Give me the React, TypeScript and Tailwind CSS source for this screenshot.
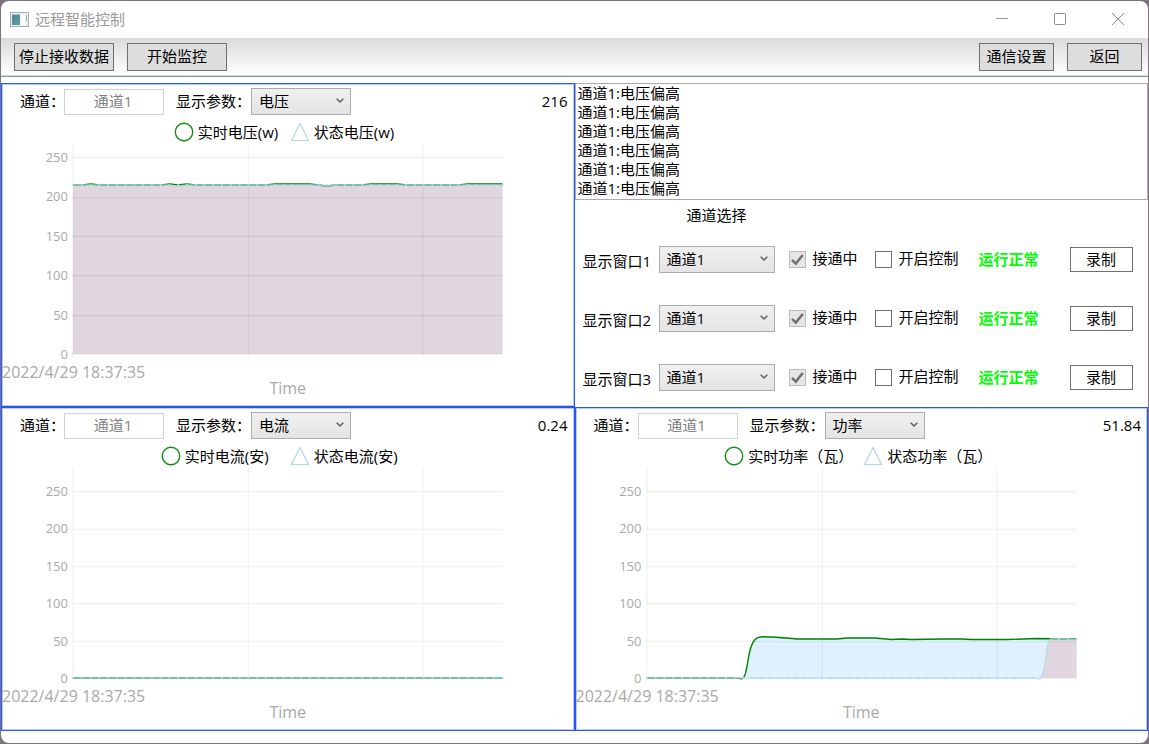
import { useState } from "react";

interface ChartInfo {
  id: string;
  param: string;
  value: string;
  live: string;
  status: string;
  legendCell: string;
  labelPad: string;
  gridY: number[];
  fills: Array<{ d: string; color: string }>;
  liveLine: string;
  statusLine: string;
  statusPoints: Array<[number, number]>;
}

const TICKS = [250, 200, 150, 100, 50, 0];
const PARAMS = ["电压", "电流", "功率"];
const CHANNELS = ["通道1", "通道2", "通道3"];
const STEP = 430 / 49;

const pointsAt = (y: number, from = 0, to = 49): Array<[number, number]> =>
  Array.from({ length: to - from + 1 }, (_, i) => [(from + i) * STEP, y]);

const POWER_LIVE =
  "M0 209 H88 C93 209 96 212 98 206 C102 196 101 170 113 168 C118 167 140 169 151 170 L190 170 L200 169 L228 169 L245 170.5 L255 170 L265 170.5 L295 170 L315 170 L325 170.5 L360 170.5 L390 169.5 L430 170";
const POWER_STATUS =
  "M0 209 H388 C392 209 394 212 396 206 C400 194 399 174 404 170 L412 169.5 L430 170.5";

const CHARTS: Record<string, ChartInfo> = {
  voltage: {
    id: "voltage", param: "电压", value: "216",
    live: "实时电压(w)", status: "状态电压(w)",
    legendCell: "w-[116px]", labelPad: "pt-1",
    gridY: [12.5, 52.5, 91.5, 130.5, 170.5, 209.5],
    fills: [{ d: "M0 40 H430 V209 H0 Z", color: "#e1d5df" }],
    liveLine:
      "M0 40 H9 L18 39 L27 40 H88 L97 39 L105 40 L114 39 L123 40 H193 L202 39 H237 L246 40 L254 41 L263 40 H289 L298 39 H325 L334 40 H386 L395 39 H430",
    statusLine: "M0 40 H96 L105 41 L114 40 H245 L254 41 L263 40 H430",
    statusPoints: pointsAt(40),
  },
  current: {
    id: "current", param: "电流", value: "0.24",
    live: "实时电流(安)", status: "状态电流(安)",
    legendCell: "w-[129px]", labelPad: "pt-[14px]",
    gridY: [22.5, 60.5, 97.5, 134.5, 172.5, 209.5],
    fills: [],
    liveLine: "M0 209 H430",
    statusLine: "M0 209 H430",
    statusPoints: pointsAt(209),
  },
  power: {
    id: "power", param: "功率", value: "51.84",
    live: "实时功率（瓦）", status: "状态功率（瓦）",
    legendCell: "w-[139px]", labelPad: "pt-[14px]",
    gridY: [22.5, 60.5, 97.5, 134.5, 172.5, 209.5],
    fills: [
      { d: `${POWER_LIVE} V209 Z`, color: "#dff0ff" },
      { d: "M394 209 C400 200 399 174 404 170 L430 170 V209 Z", color: "#e1d5df" },
    ],
    liveLine: POWER_LIVE,
    statusLine: POWER_STATUS,
    statusPoints: [...pointsAt(209, 0, 44), ...pointsAt(170, 47, 49)],
  },
};

const ALARMS = Array.from({ length: 6 }, () => "通道1:电压偏高");

function ComboBox({ id, value, options, width }: {
  id: string; value: string; options: string[]; width: string;
}) {
  const [current, setCurrent] = useState(value);
  return (
    <div className={`relative ${width}`}>
      <select
        id={id}
        value={current}
        onChange={e => setCurrent(e.target.value)}
        className="block h-[27px] w-full appearance-none border border-[#acacac] bg-linear-to-b from-[#f0f0f0] to-[#e4e4e4] pb-0.5 pl-[7px]"
      >
        {options.map(o => <option key={o} value={o}>{o}</option>)}
      </select>
      <svg viewBox="0 0 8 6" className="pointer-events-none absolute top-[10px] right-[7px] h-[6px] w-2">
        <path d="M0.7 0.8 L4 4 L7.3 0.8" fill="none" stroke="#606060" strokeWidth="1.6" />
      </svg>
    </div>
  );
}

function Plot({ chart }: { chart: ChartInfo }) {
  return (
    <svg viewBox="0 0 430 211" preserveAspectRatio="none" className="h-[211px] min-w-0 flex-1 overflow-visible">
      {chart.fills.map(f => <path key={f.d} d={f.d} fill={f.color} />)}
      <g stroke="#000" strokeOpacity="0.05" strokeWidth="1.3">
        {chart.gridY.map(y => <line key={y} x1="-1" x2="431" y1={y} y2={y} />)}
        {[0, 175.5, 350.5].map(x => <line key={x} x1={x} x2={x} y1="-1" y2="211" />)}
      </g>
      <path d={chart.liveLine} fill="none" stroke="#008000" strokeWidth="1.4" />
      <path d={chart.statusLine} fill="none" stroke="#add8e6" strokeOpacity="0.75" strokeWidth="1.4" />
      {chart.statusPoints.map(([x, y]) => (
        <circle key={x} cx={x} cy={y} r="1.1" fill="#add8e6" />
      ))}
    </svg>
  );
}

function ChartPanel({ chart }: { chart: ChartInfo }) {
  return (
    <section className="min-w-0 border border-[#2457f5] pt-1 shadow-[inset_0_0_0_1px_#b9cbfc]">
      <div className="flex h-[27px] items-center pl-[18px] pr-1.5">
        <label htmlFor={`${chart.id}-channel`} className="w-11 shrink-0 pb-0.5 whitespace-nowrap">通道：</label>
        <input
          id={`${chart.id}-channel`}
          type="text"
          defaultValue="通道1"
          disabled
          className="h-[26px] w-[100px] border border-[#cfd1d5] bg-white pr-0.5 pb-0.5 text-center text-[#838383]"
        />
        <label htmlFor={`${chart.id}-param`} className="ml-3 w-[75px] shrink-0 pb-0.5 whitespace-nowrap">显示参数：</label>
        <ComboBox id={`${chart.id}-param`} value={chart.param} options={PARAMS} width="w-[100px]" />
        <output className="ml-auto pb-0.5">{chart.value}</output>
      </div>

      {/* 图例 */}
      <div className="flex h-[30px] items-center justify-center pt-1 pl-1">
        <div className={`flex items-center gap-1 whitespace-nowrap ${chart.legendCell}`}>
          <svg viewBox="0 0 20 20" className="size-5 shrink-0">
            <circle cx="10" cy="10" r="8.7" fill="#fff" stroke="#158a15" strokeWidth="1.4" />
          </svg>
          {chart.live}
        </div>
        <div className={`flex items-center gap-1 whitespace-nowrap ${chart.legendCell}`}>
          <svg viewBox="0 0 20 20" className="size-5 shrink-0">
            <path d="M10 1.5 L18.5 18.5 H1.5 Z" fill="#fff" stroke="#add8e6" strokeWidth="1.2" />
          </svg>
          {chart.status}
        </div>
      </div>

      <div className="flex h-[218px] items-start pr-[71px]">
        <div className={`flex h-full w-[71px] shrink-0 flex-col justify-between pr-[5px] pb-px text-right text-[13px] leading-4 text-[#a9a9a9] ${chart.labelPad}`}>
          {TICKS.map(t => <span key={t}>{t}</span>)}
        </div>
        <Plot chart={chart} />
      </div>
      <div className="pt-px text-base leading-4 text-[#a9a9a9]">
        <div>2022/4/29 18:37:35</div>
        <div className="text-center">Time</div>
      </div>
    </section>
  );
}

function ChannelRow({ index }: { index: number }) {
  const [control, setControl] = useState(false);
  return (
    <div className="flex h-[59px] items-center whitespace-nowrap">
      <label htmlFor={`window-${index}`} className="w-[76px] shrink-0 pt-0.5">显示窗口{index}</label>
      <ComboBox id={`window-${index}`} value="通道1" options={CHANNELS} width="w-[116px]" />
      <label className="ml-3.5 flex w-[86px] shrink-0 items-center gap-[7px]">
        <span className="relative size-[17px]">
          <input type="checkbox" checked disabled readOnly className="block size-[17px] appearance-none border border-[#bcbcbc] bg-[#e6e6e6]" />
          <svg viewBox="0 0 17 17" className="pointer-events-none absolute inset-0 size-[17px]">
            <path d="M3 8.8 L6.8 12.6 L13.8 4" fill="none" stroke="#707070" strokeWidth="2.5" />
          </svg>
        </span>
        <span className="pb-1">接通中</span>
      </label>
      <label className="flex w-[104px] shrink-0 items-center gap-[7px]">
        <input
          type="checkbox"
          checked={control}
          onChange={e => setControl(e.target.checked)}
          className="block size-[17px] appearance-none border border-[#707070] bg-white checked:bg-[#707070]"
        />
        <span className="pb-1">开启控制</span>
      </label>
      <span className="w-[91px] shrink-0 pb-0.5 font-bold text-[#00ff00]">运行正常</span>
      <button type="button" className="h-[25px] w-[63px] border border-[#707070] bg-white pb-0.5">录制</button>
    </div>
  );
}

function TitleBar() {
  return (
    <header className="flex h-[37px] items-center pr-px text-[#999]">
      <svg viewBox="0 0 19 15" className="ml-[9px] h-[15px] w-[19px]">
        <defs>
          <linearGradient id="app-icon" x1="0" y1="0" x2="1" y2="1">
            <stop offset="0" stopColor="#4f7fa8" />
            <stop offset="1" stopColor="#5aa58c" />
          </linearGradient>
        </defs>
        <rect x="0.5" y="0.5" width="18" height="14" fill="#eef0f2" stroke="#a9adb3" />
        <rect x="2" y="2.5" width="8" height="10.5" fill="url(#app-icon)" />
        <rect x="11" y="2.5" width="4" height="10.5" fill="#fafafa" />
        <rect x="16" y="3" width="1" height="6" fill="#7fb59f" />
      </svg>
      <h1 className="ml-1.5 pb-0.5">远程智能控制</h1>
      <div className="ml-auto flex h-full pb-0.5">
        <button type="button" aria-label="最小化" className="flex w-[58px] items-center justify-center">
          <svg viewBox="0 0 12 12" className="size-3"><path d="M0 5.5 H12" stroke="#999" /></svg>
        </button>
        <button type="button" aria-label="最大化" className="flex w-[58px] items-center justify-center">
          <svg viewBox="0 0 12 12" className="size-3"><rect x="0.5" y="0.5" width="11" height="11" rx="0.8" fill="none" stroke="#8c8c8c" /></svg>
        </button>
        <button type="button" aria-label="关闭" className="flex w-[58px] items-center justify-center">
          <svg viewBox="0 0 12 12" className="size-3"><path d="M0 0 L12 12 M12 0 L0 12" stroke="#8c8c8c" /></svg>
        </button>
      </div>
    </header>
  );
}

export default function App() {
  const [receiving, setReceiving] = useState(true);
  const toolButton = "h-7 border border-[#707070] bg-[#dddddd] pb-0.5";

  return (
    <div className="flex min-h-screen flex-col bg-[#79747e] p-px font-['Open_Sans','Noto_Sans_CJK_SC',sans-serif] text-[15px] leading-5 text-black" lang="zh-CN">
      <div className="flex flex-1 flex-col overflow-hidden rounded-lg bg-white">
        <TitleBar />

        <div className="flex h-[37px] items-center gap-[13px] bg-linear-to-b from-[#dadada] to-white pr-1.5 pl-[13px]">
          <button type="button" onClick={() => setReceiving(v => !v)} className={`w-[100px] ${toolButton}`}>
            {receiving ? "停止接收数据" : "开始接收数据"}
          </button>
          <button type="button" className={`w-[100px] ${toolButton}`}>开始监控</button>
          <button type="button" className={`ml-auto w-[75px] ${toolButton}`}>通信设置</button>
          <button type="button" className={`w-[75px] ${toolButton}`}>返回</button>
        </div>
        <div className="mb-1.5 border-t border-[#d3dfdb] bg-[#7f9a94] pb-px" />

        <main className="mb-3 grid flex-1 grid-cols-2 grid-rows-2">
          <ChartPanel chart={CHARTS.voltage} />

          <section className="min-w-0">
            <ul className="h-[117px] overflow-hidden border border-[#ababab] pl-0.5 leading-[19px]">
              {ALARMS.map((a, i) => <li key={i}>{a}</li>)}
            </ul>
            <div className="pl-2">
              <h2 className="ml-[76px] w-[116px] pt-[5px] pb-[5px] text-center">通道选择</h2>
              {[1, 2, 3].map(i => <ChannelRow key={i} index={i} />)}
            </div>
          </section>

          <ChartPanel chart={CHARTS.current} />
          <ChartPanel chart={CHARTS.power} />
        </main>
      </div>
    </div>
  );
}
